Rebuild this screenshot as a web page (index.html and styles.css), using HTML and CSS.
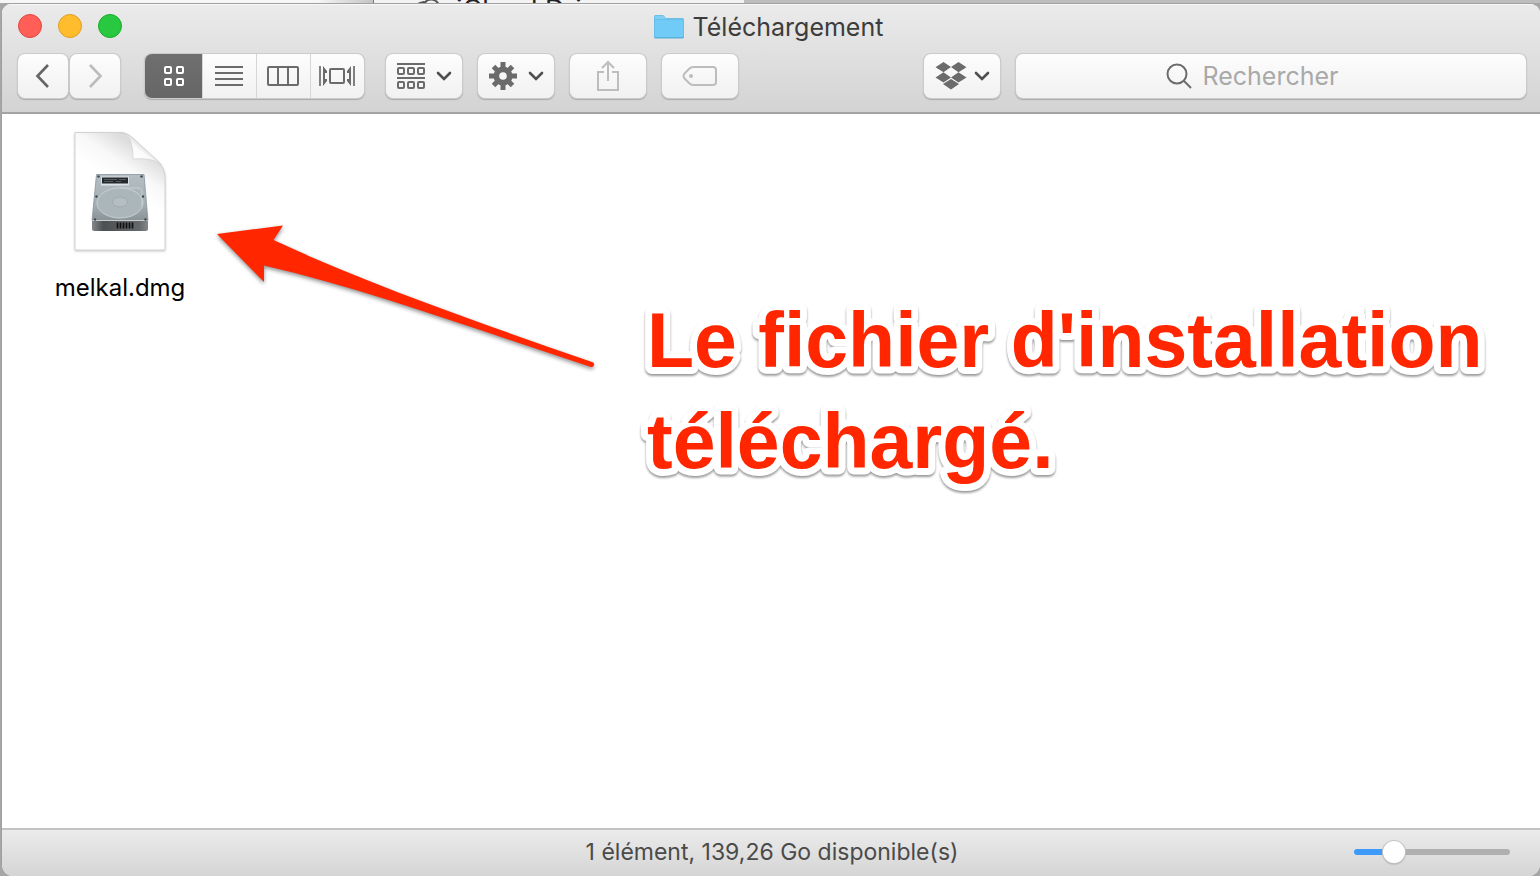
FILE: index.html
```html
<!DOCTYPE html>
<html lang="fr">
<head>
<meta charset="utf-8">
<title>Téléchargement</title>
<link rel="stylesheet" href="styles.css">
</head>
<body>
<div class="backdrop" aria-hidden="true">
  <div class="backdrop-side"></div>
  <div class="backdrop-main">
    <svg class="backdrop-cloud" width="32" height="22" viewBox="0 0 32 22"><path d="M6 20a6 6 0 0 1-2-17.500q2-1 3 0A8 8 0 0 1 21 6a7 7 0 0 1 2 14z" fill="none" stroke="#555" stroke-width="2"/></svg>
    <span>iCloud Drive</span>
  </div>
  <div class="backdrop-rest"></div>
</div>
<main class="window">
  <header class="header">
    <div class="titlebar">
      <div class="lights">
        <button class="light close" aria-label="Fermer"></button>
        <button class="light minimize" aria-label="Réduire"></button>
        <button class="light zoom" aria-label="Agrandir"></button>
      </div>
      <h1 class="title">
        <svg width="32" height="26" viewBox="0 0 32 26"><path d="M1 23V3q0-2 2-2h7l3 3h16q2 0 2 2v17q0 1.500-1.500 1.500h-27Q1 24.500 1 23z" fill="#58b0dc"/><path d="M1.500 5.500V3q0-1.500 1.500-1.500h7l3 3h16q1 0 1.500 1z" fill="#7fd0f2"/><path d="M1.500 6h29v17H1.500z" fill="#70cbf6"/></svg>
        <span>Téléchargement</span>
      </h1>
    </div>
    <div class="toolbar">
      <div class="nav">
        <button class="btn" aria-label="Précédent"><svg width="16" height="26" viewBox="0 0 16 26"><path d="M13 2 2.500 13 13 24" fill="none" stroke="#656565" stroke-width="2.600"/></svg></button>
        <button class="btn" aria-label="Suivant"><svg width="16" height="26" viewBox="0 0 16 26"><path d="M3 2 13.500 13 3 24" fill="none" stroke="#bcbcbc" stroke-width="2.600"/></svg></button>
      </div>
      <div class="views">
        <button class="view active" aria-label="Icônes"><svg width="22" height="22" viewBox="0 0 22 22" fill="none" stroke="#fff" stroke-width="2"><rect x="2" y="2" width="6" height="6" rx="1"/><rect x="14" y="2" width="6" height="6" rx="1"/><rect x="2" y="14" width="6" height="6" rx="1"/><rect x="14" y="14" width="6" height="6" rx="1"/></svg></button>
        <button class="view" aria-label="Liste"><svg width="28" height="22" viewBox="0 0 28 22"><path d="M0 2h28M0 8h28M0 14h28M0 20h28" stroke="#6b6b6b" stroke-width="2"/></svg></button>
        <button class="view" aria-label="Colonnes"><svg width="32" height="20" viewBox="0 0 32 20" fill="none" stroke="#6b6b6b" stroke-width="2"><rect x="1" y="1" width="30" height="18" rx="1"/><path d="M11 1v18M21 1v18"/></svg></button>
        <button class="view" aria-label="Cover Flow"><svg width="36" height="20" viewBox="0 0 36 20"><path d="M1 0v20M35 0v20" stroke="#6b6b6b" stroke-width="1.700"/><path d="M4 0 8 5v2H6v6h2v2l-4 5zM32 0l-4 5v2h2v6h-2v2l4 5z" fill="#6b6b6b"/><rect x="11" y="3" width="14" height="14" rx="1" fill="none" stroke="#6b6b6b" stroke-width="2"/></svg></button>
      </div>
      <button class="btn tool" aria-label="Organiser">
        <svg width="30" height="28" viewBox="0 0 30 28" fill="none" stroke="#6b6b6b" stroke-width="2"><path d="M1 2h28M1 16h28"/><rect x="2" y="6" width="6" height="6" rx="1"/><rect x="12" y="6" width="6" height="6" rx="1"/><rect x="22" y="6" width="6" height="6" rx="1"/><rect x="2" y="20" width="6" height="6" rx="1"/><rect x="12" y="20" width="6" height="6" rx="1"/><rect x="22" y="20" width="6" height="6" rx="1"/></svg>
        <svg width="16" height="10" viewBox="0 0 16 10"><path d="m2 2 6 6 6-6" fill="none" stroke="#4f4f4f" stroke-width="2.600" stroke-linecap="round"/></svg>
      </button>
      <button class="btn tool" aria-label="Action">
        <svg width="30" height="28" viewBox="-15 -14 30 28"><g stroke="#6b6b6b" stroke-width="5"><path d="M0-14V14M-14 0H14M-9.500-9.500 9.500 9.500M-9.500 9.500 9.500-9.500"/></g><circle r="9.500" fill="#6b6b6b"/><circle r="3.800" fill="#f8f8f8"/></svg>
        <svg width="16" height="10" viewBox="0 0 16 10"><path d="m2 2 6 6 6-6" fill="none" stroke="#4f4f4f" stroke-width="2.600" stroke-linecap="round"/></svg>
      </button>
      <button class="btn tool" aria-label="Partager">
        <svg width="24" height="32" viewBox="0 0 24 32" fill="none" stroke="#bdbdbd" stroke-width="2"><path d="M8 12H2v18h20V12h-6M12 21V2M6 8l6-6 6 6"/></svg>
      </button>
      <button class="btn tool" aria-label="Tags">
        <svg width="36" height="22" viewBox="0 0 36 22" fill="none" stroke="#bdbdbd" stroke-width="2"><path d="M11 2h20q3 0 3 3v12q0 3-3 3H11Q9 20 7 18l-4-4q-3-3 0-6l4-4q2-2 4-2z"/><circle cx="9" cy="11" r="2" fill="#bdbdbd" stroke="none"/></svg>
      </button>
      <div class="spacer"></div>
      <button class="btn tool dropbox" aria-label="Dropbox">
        <svg width="32" height="28" viewBox="0 0 32 28" fill="#6b6b6b"><path d="m8.500 0 7.500 5-7.500 5.200L.500 5.200zM23.500 0l8 5.200-8 5L16 5zM8.500 10.200l7.500 5.200-7.500 5-8-5zM23.500 10.200l8 5.200-8 5-7.500-5zM16 17l8 5-8 5.500L8 22z"/></svg>
        <svg width="16" height="10" viewBox="0 0 16 10"><path d="m2 2 6 6 6-6" fill="none" stroke="#4f4f4f" stroke-width="2.600" stroke-linecap="round"/></svg>
      </button>
      <label class="search">
        <svg width="26" height="26" viewBox="0 0 26 26" fill="none" stroke="#6b6b6b" stroke-width="2"><circle cx="11" cy="11" r="9.500"/><path d="m18 18 7 7"/></svg>
        <input type="search" placeholder="Rechercher" aria-label="Rechercher">
      </label>
    </div>
  </header>
  <section class="content">
    <figure class="file">
      <svg width="96" height="124" viewBox="72 130 96 124">
        <defs>
          <linearGradient id="curl" gradientUnits="userSpaceOnUse" x1="133" y1="160" x2="144" y2="147"><stop offset="0" stop-color="#fff"/><stop offset=".7" stop-color="#fafafa"/><stop offset="1" stop-color="#dedede"/></linearGradient>
          <linearGradient id="page" gradientUnits="userSpaceOnUse" x1="112" y1="182" x2="136" y2="146"><stop offset="0" stop-color="#fff"/><stop offset=".5" stop-color="#f8f8f8"/><stop offset="1" stop-color="#dcdcdc"/></linearGradient>
          <linearGradient id="metal" x1="0" y1="0" x2="0" y2="1"><stop offset="0" stop-color="#b3bec4"/><stop offset=".6" stop-color="#a6b1b6"/><stop offset="1" stop-color="#8a9396"/></linearGradient>
          <linearGradient id="front" x1="0" y1="0" x2="1" y2="0"><stop offset="0" stop-color="#85888a"/><stop offset=".2" stop-color="#4d5052"/><stop offset=".85" stop-color="#66696b"/><stop offset="1" stop-color="#85888a"/></linearGradient>
        </defs>
        <path class="sheet" d="M75 132.500h45c7 0 11 4 15 8l23 21c4 4 7 8 7 17v71.500H75z" fill="url(#page)" stroke="#d2d2d2"/>
        <path d="M120 132.500c9 1 13 9 13 26.500 13-1 24 1 28 6-1-2-2-3-3-4l-23-21c-4-4-9-7.500-15-7.500z" fill="url(#curl)" stroke="#cecece" stroke-width=".7"/>
        <path d="m92 221h56v8q0 2-2 2H94q-2 0-2-2z" fill="url(#front)"/>
        <path d="M96.500 174.500h47.500l4 46H92z" fill="url(#metal)" stroke="#89949a" stroke-width=".8"/>
        <path d="M92.500 220.500h55" stroke="#c6cdd0"/>
        <ellipse cx="120" cy="203" rx="23" ry="15" fill="#abb6bb" stroke="#c8d0d4"/>
        <path d="M120 188h19q3 0 3 6v12" fill="none" stroke="#c8d0d4"/>
        <ellipse cx="120" cy="202" rx="7.500" ry="5" fill="#b5bfc3" stroke="#98a3a8" stroke-width=".7"/>
        <path d="M101 176.500h28v9h-28z" fill="#dce1e3"/><path d="M102 177.500h26v6h-26z" fill="#252a2d"/>
        <path d="M104 179.500h13m2 0h7M104 181.500h9m3 0h5" stroke="#5f686c" stroke-width=".8"/>
        <g fill="#40474a"><circle cx="98.500" cy="176.500" r="1.200"/><circle cx="141.500" cy="176.500" r="1.200"/><circle cx="96.500" cy="196.500" r="1.200"/><circle cx="143" cy="196.500" r="1.200"/><circle cx="95" cy="219.500" r="1.200"/><circle cx="145.500" cy="219.500" r="1.200"/></g>
        <path d="M117.500 222.500v6m3-6v6m3-6v6m3-6v6m3-6v6m3-6v6" stroke="#111" stroke-width="1.700"/>
      </svg>
      <figcaption>melkal.dmg</figcaption>
    </figure>
    <svg class="arrow" width="390" height="154" viewBox="210 220 390 154"><path d="M217 234 283 225.500 273.500 240C370 285 480 323 592 362a2.500 2.500 0 0 1-1 5C480 331 370 290 264 265.500V282z" fill="#ff2600"/></svg>
    <svg class="note" width="860" height="220" viewBox="0 0 860 220">
      <text x="11" y="77">Le fichier d'installation</text>
      <text x="11" y="178">téléchargé.</text>
    </svg>
  </section>
  <footer class="status">
    <span class="status-text">1 élément, 139,26 Go disponible(s)</span>
    <input class="slider" type="range" min="0" max="100" value="22" aria-label="Taille des icônes">
  </footer>
</main>
</body>
</html>
```
FILE: styles.css
```css
* {
  box-sizing: border-box;
}

body {
  margin: 0;
  min-height: 100vh;
  display: flex;
  flex-direction: column;
  background: #a6a6a6;
  font-family: Inter, "Liberation Sans", sans-serif;
  color: #3c3c3c;
}

button {
  margin: 0;
  padding: 0;
  border: 0;
  font: inherit;
}

svg {
  display: block;
  flex: none;
}

.backdrop {
  display: flex;
  height: 3px;
  overflow: hidden;
}

.backdrop-side {
  width: 374px;
  background: linear-gradient(90deg, #f6f6f6 85%, #c4c4c4);
  border-right: 1px solid #777;
}

.backdrop-main {
  display: flex;
  width: 370px;
  padding-left: 44px;
  background: #f3f3f3;
  font-size: 27px;
  line-height: 20px;
  color: #222;
}

.backdrop-cloud {
  margin-right: 6px;
}

.backdrop-rest {
  flex: 1;
  background: #bdbdbd;
}

.window {
  flex: 1;
  display: flex;
  flex-direction: column;
  margin-left: 1px;
  border: 1px solid #a0a0a0;
  border-width: 1px 0 0 1px;
  border-radius: 10px 10px 12px 12px;
  background: #fff;
  overflow: hidden;
}

.header {
  padding: 0 14px 14px 16px;
  background: linear-gradient(#ebebeb, #d3d3d3);
  border-bottom: 2px solid #a3a3a3;
  box-shadow: inset 0 1px #f8f8f8;
}

.titlebar {
  display: grid;
  grid-template-columns: 1fr auto 1fr;
  align-items: center;
  height: 44px;
}

.lights {
  display: flex;
  gap: 16px;
}

.light {
  width: 24px;
  height: 24px;
  border-radius: 50%;
}

.close {
  background: #ff5f57;
  border: 1px solid #e2463f;
}

.minimize {
  background: #ffbd2e;
  border: 1px solid #e09e21;
}

.zoom {
  background: #28c940;
  border: 1px solid #1aab29;
}

.title {
  display: flex;
  align-items: center;
  gap: 8px;
  margin: 0;
  padding: 2px 8px 0 0;
  font-size: 25px;
  font-weight: 400;
  line-height: 32px;
}

.toolbar {
  display: flex;
  align-items: center;
  gap: 16px;
  padding-top: 6px;
}

.nav {
  display: flex;
  gap: 2px;
  margin-right: 9px;
}

.btn,
.view,
.search {
  display: flex;
  align-items: center;
  justify-content: center;
  height: 44px;
  background: linear-gradient(#fdfdfd, #f1f1f1);
}

.btn,
.search,
.views {
  border-radius: 7px;
  box-shadow: 0 0 0 1px #cbcbcb, 0 1px 1px 1px #aaa;
}

.nav .btn {
  width: 50px;
}

.tool {
  gap: 10px;
  width: 76px;
}

.dropbox {
  gap: 7px;
}

.views {
  display: flex;
  margin-right: 6px;
  overflow: hidden;
}

.view {
  width: 54px;
  padding-right: 2px;
  border-left: 1px solid #d6d6d6;
}

.view.active {
  width: 57px;
  padding: 0;
  border-left: 0;
  background: linear-gradient(#6f6f6f, #666);
}

.spacer {
  flex: 1;
  margin: 0 -8px;
}

.search {
  flex: 3;
  gap: 11px;
}

.search input {
  width: 174px;
  padding: 0;
  border: 0;
  outline: 0;
  background: transparent;
  font: 25px/32px Inter, "Liberation Sans", sans-serif;
}

.search input::placeholder {
  color: #a9a9a9;
}

.content {
  position: relative;
  flex: 1;
  padding: 16px 32px;
}

.file {
  display: flex;
  flex-direction: column;
  align-items: center;
  gap: 18px;
  width: 172px;
  margin: 0;
  color: #000;
}

.file figcaption {
  font-size: 24px;
  line-height: 32px;
}

.sheet {
  filter: drop-shadow(0 1px 1px rgb(0 0 0 / 20%));
}

.arrow {
  position: absolute;
  left: 208px;
  top: 106px;
  filter: drop-shadow(0 2px 2px rgb(0 0 0 / 45%));
}

.note {
  position: absolute;
  left: 634px;
  top: 176px;
  font: bold 77px "Liberation Sans", Arial, sans-serif;
  fill: #ff2600;
  stroke: #fff;
  stroke-width: 14px;
  stroke-linejoin: round;
  paint-order: stroke fill;
  filter: drop-shadow(0 2px 1px rgb(0 0 0 / 40%));
}

.status {
  display: grid;
  grid-template-columns: 1fr auto 1fr;
  align-items: center;
  height: 48px;
  padding: 0 30px 2px 32px;
  border-top: 2px solid #c3c3c3;
  background: linear-gradient(#ebebeb, #d5d5d5);
  font-size: 23px;
  line-height: 28px;
  color: #4a4a4a;
}

.status-text {
  grid-column: 2;
}

.slider {
  justify-self: end;
  width: 156px;
  height: 24px;
  margin: 0;
  appearance: none;
  background: transparent;
}

.slider::-webkit-slider-runnable-track {
  height: 6px;
  border-radius: 3px;
  background: linear-gradient(90deg, #3e9bfa 25%, #b0b0b0 25%);
}

.slider::-webkit-slider-thumb {
  appearance: none;
  width: 22px;
  height: 22px;
  margin-top: -8px;
  border-radius: 50%;
  background: #fff;
  box-shadow: 0 0 0 1px #c4c4c4, 0 1px 2px #888;
}
```
